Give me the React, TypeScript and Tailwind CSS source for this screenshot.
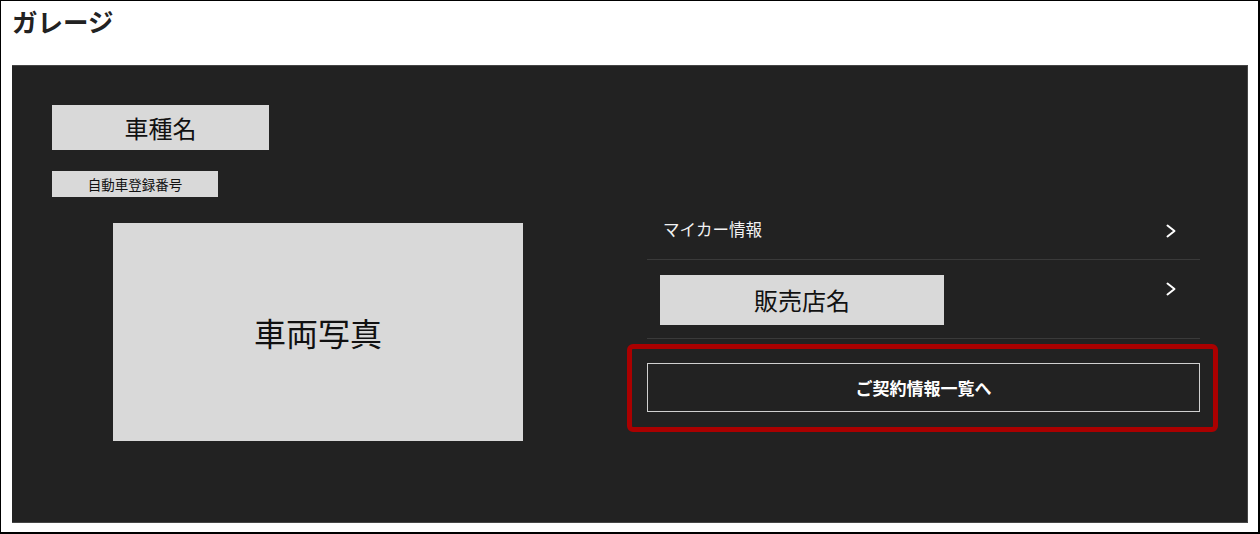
import React from "react";

const font = { fontFamily: '"Noto Sans CJK JP", "Noto Sans", sans-serif' };

const Chevron = ({ className = "" }: { className?: string }) => (
  <svg
    className={className}
    width="10"
    height="14"
    viewBox="0 0 10 14"
    fill="none"
    stroke="#ffffff"
    strokeWidth="2"
    strokeLinecap="round"
    strokeLinejoin="round"
  >
    <polyline points="1.5,1.5 8.5,7 1.5,12.5" />
  </svg>
);

const App = () => {
  return (
    <div
      className="flex h-[534px] w-[1260px] flex-col overflow-hidden border-b-2 border-l border-r-2 border-t border-black bg-white pl-[11px] pr-[10px]"
      style={font}
    >
      <h1 className="h-[64px] pt-[3px] text-[25.5px] font-bold leading-[34px] text-[#222]">
        ガレージ
      </h1>

      <div className="flex h-[458px] border-b border-r border-t border-[#454545] bg-[#222222] pl-[40px] pr-[47px] pt-[39px]">
        {/* left */}
        <div className="flex w-[595px] flex-col">
          <div className="flex h-[45px] w-[217px] items-center justify-center bg-[#d9d9d9] text-[24px] text-[#111]">
            車種名
          </div>
          <div className="mt-[21px] flex h-[26px] w-[166px] items-center justify-center bg-[#d9d9d9] text-[13.5px] text-[#111]">
            自動車登録番号
          </div>
          <div className="ml-[61px] mt-[26px] flex h-[218px] w-[410px] items-center justify-center bg-[#d9d9d9] text-[32px] text-[#111]">
            車両写真
          </div>
        </div>

        {/* right */}
        <div className="mt-[95px] flex w-[553px] flex-col">
          <div className="flex h-[60px] items-center justify-between border-b border-[#3a3a3a] pl-[16px] pr-[24px]">
            <span className="text-[16.5px] text-[#f2f2f2]">マイカー情報</span>
            <Chevron className="mt-[2px]" />
          </div>
          <div className="flex items-start justify-between border-b border-[#3a3a3a] pb-[13px] pl-[13px] pr-[24px] pt-[15px]">
            <div className="flex h-[50px] w-[284px] items-center justify-center bg-[#d9d9d9] text-[24px] text-[#111]">
              販売店名
            </div>
            <Chevron className="mt-[7px]" />
          </div>

          <div className="relative mt-[24px]">
            <button className="flex h-[49px] w-full items-center justify-center border border-[#d0d0d0] text-[17px] font-bold text-white">
              ご契約情報一覧へ
            </button>
            <div className="pointer-events-none absolute -bottom-[20px] -left-[20px] -right-[18px] -top-[19px] rounded-[6px] border-[5px] border-[#aa0000]" />
          </div>
        </div>
      </div>
    </div>
  );
};

export default App;
